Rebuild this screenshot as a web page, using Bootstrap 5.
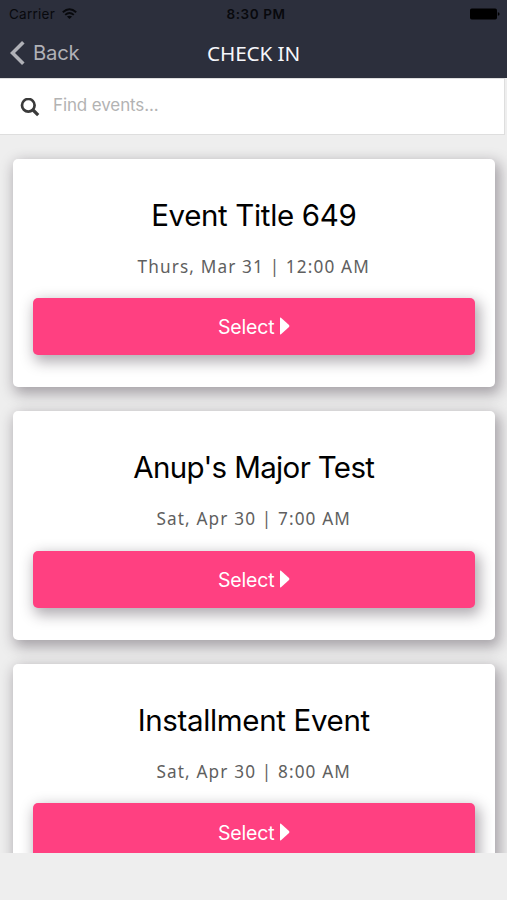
<!DOCTYPE html>
<html lang="en">
<head>
<meta charset="utf-8">
<meta name="viewport" content="width=device-width, initial-scale=1">
<title>Check In</title>
<link href="https://cdn.jsdelivr.net/npm/bootstrap@5.3.0/dist/css/bootstrap.min.css" rel="stylesheet">
<style>
  body { background: #eee; font-family: Inter, "Liberation Sans", sans-serif; height: 900px; overflow: hidden; }
  .app-header { background: #2c2f3c; height: 78px; }
  .status-bar { height: 27px; color: #08090d; font-size: 13.5px; line-height: 28px; padding: 0 7px 0 9px; }
  .carrier { letter-spacing: .25px; }
  .carrier + svg { margin-left: 7px; }
  .status-time { font-weight: 600; letter-spacing: .6px; padding-left: 3px; }
  .title-bar { height: 51px; padding: 0 11px; }
  .back-link { color: #b0b1b7; font-size: 20.3px; line-height: 52px; letter-spacing: -.25px; }
  .back-link svg { margin-right: 8px; margin-left: -1px; }
  .page-title { color: #f6f7fb; font: 400 20.7px/52px "Noto Sans", sans-serif; letter-spacing: -.1px; }
  .search-bar { height: 57px; width: 505px; background: #fff; border: 1px solid #dedede; border-left: 0; padding: 0 20px 1px; }
  .search-bar .form-control { font-size: 17px; letter-spacing: -.12px; padding: 0; margin-left: 13px; color: #444; }
  .search-bar .form-control::placeholder { color: #b3b3b3; opacity: 1; }
  .event-list { height: 718px; overflow: hidden; padding: 23.5px 12.5px 0 13px; }
  .event-list .card { height: 228.5px; margin-bottom: 24.4px; border-radius: 5px; box-shadow: 3px 5px 14px 2px rgba(40,28,42,.36); }
  .event-list .card-body { padding: 35px 19.5px 0; }
  .event-title { color: #000; font-size: 29.5px; line-height: 42px; font-weight: 400; letter-spacing: -.35px; }
  .event-title-tight { letter-spacing: -.65px; }
  .event-date { color: #5f5f5f; font: 400 17.2px/24px "Noto Sans", sans-serif; letter-spacing: 1.14px; margin: 19px 0 19.2px; }
  .btn-select { --bs-btn-color: #fff; --bs-btn-bg: #ff4081; --bs-btn-hover-color: #fff; --bs-btn-hover-bg: #f03576; height: 57.5px; border-radius: 5px; font-size: 19.5px; letter-spacing: -.15px; padding-top: 8px; box-shadow: 3px 5px 14px 2px rgba(40,28,42,.36); }
  .btn-select svg { margin: 0 0 3px 4px; }
</style>
</head>
<body>
<header class="app-header">
  <div class="status-bar row g-0">
    <div class="col d-flex align-items-center">
      <span class="carrier">Carrier</span>
      <svg width="15" height="12" viewBox="0 0 15 12" fill="none" stroke="#08090d" stroke-width="1.9"><path d="M.8 4.2Q7.5-1.9 14.2 4.2M3.2 6.9Q7.5 3.1 11.8 6.9"/><path d="M7.5 11 4.9 8.6Q7.5 6.8 10.1 8.6Z" fill="#08090d" stroke="none"/></svg>
    </div>
    <div class="col-auto status-time">8:30 PM</div>
    <div class="col d-flex align-items-center justify-content-end">
      <svg width="30" height="12" viewBox="0 0 30 12"><rect x="0" y="0.5" width="27" height="11" rx="1.8" fill="#000"/><path d="M27.8 4.3q1.8.2 1.8 1.7t-1.8 1.7Z" fill="#000"/></svg>
    </div>
  </div>
  <nav class="title-bar row g-0">
    <div class="col">
      <a href="#" class="back-link d-inline-flex align-items-center text-decoration-none"><svg width="15" height="24" viewBox="0 0 15 24" fill="none" stroke="#b0b1b7" stroke-width="3.6"><path d="M13.3 1.3 2.5 12l10.8 10.7"/></svg>Back</a>
    </div>
    <div class="col-auto page-title">CHECK IN</div>
    <div class="col"></div>
  </nav>
</header>
<form class="search-bar d-flex align-items-center">
  <svg class="flex-shrink-0 mt-1" width="20" height="20" viewBox="0 0 20 20" fill="none" stroke="#3a3a3a"><circle cx="8.3" cy="7.3" r="6.3" stroke-width="2.7"/><path d="m13 12 5.2 5.2" stroke-width="3.2"/></svg>
  <input class="form-control border-0 shadow-none bg-transparent" type="text" placeholder="Find events..." aria-label="Find events">
</form>
<main class="event-list">
  <article class="card border-0">
    <div class="card-body text-center">
      <h2 class="event-title mb-0">Event Title 649</h2>
      <p class="event-date">Thurs, Mar 31 | 12:00 AM</p>
      <button class="btn btn-select border-0 w-100 d-flex align-items-center justify-content-center" type="button">Select<svg width="11" height="18" viewBox="0 0 11 18"><path d="M1 1.2Q1 0 2 .8L10 8q.9 1 0 2l-8 7.2q-1 .8-1-.4Z" fill="#fff"/></svg></button>
    </div>
  </article>
  <article class="card border-0">
    <div class="card-body text-center">
      <h2 class="event-title event-title-tight mb-0">Anup's Major Test</h2>
      <p class="event-date">Sat, Apr 30 | 7:00 AM</p>
      <button class="btn btn-select border-0 w-100 d-flex align-items-center justify-content-center" type="button">Select<svg width="11" height="18" viewBox="0 0 11 18"><path d="M1 1.2Q1 0 2 .8L10 8q.9 1 0 2l-8 7.2q-1 .8-1-.4Z" fill="#fff"/></svg></button>
    </div>
  </article>
  <article class="card border-0">
    <div class="card-body text-center">
      <h2 class="event-title mb-0">Installment Event</h2>
      <p class="event-date">Sat, Apr 30 | 8:00 AM</p>
      <button class="btn btn-select border-0 w-100 d-flex align-items-center justify-content-center" type="button">Select<svg width="11" height="18" viewBox="0 0 11 18"><path d="M1 1.2Q1 0 2 .8L10 8q.9 1 0 2l-8 7.2q-1 .8-1-.4Z" fill="#fff"/></svg></button>
    </div>
  </article>
</main>
<script src="https://cdn.jsdelivr.net/npm/bootstrap@5.3.0/dist/js/bootstrap.bundle.min.js"></script>
</body>
</html>
